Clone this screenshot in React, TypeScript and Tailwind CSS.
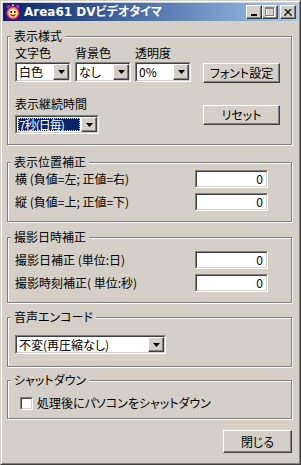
import React from "react";

const raised =
  "border border-t-white border-l-white border-r-[#404040] border-b-[#404040] shadow-[inset_-1px_-1px_0_#808080] bg-[#d4d0c8]";

function Arrow() {
  return (
    <svg width="7" height="4" viewBox="0 0 7 4">
      <polygon points="0,0 7,0 3.5,4" fill="#000" />
    </svg>
  );
}

function Sunken({ className = "", children }: { className?: string; children?: React.ReactNode }) {
  return (
    <div className={`flex border border-t-[#808080] border-l-[#808080] border-r-white border-b-white ${className}`}>
      <div className="flex flex-1 min-w-0 border border-t-[#404040] border-l-[#404040] border-r-[#d4d0c8] border-b-[#d4d0c8] bg-white">
        {children}
      </div>
    </div>
  );
}

function Combo({ value, className = "", selected }: { value: string; className?: string; selected?: boolean }) {
  return (
    <Sunken className={className}>
      {selected ? (
        <div className="flex-1 min-w-0 m-[1px] flex items-center bg-[#0a246a] text-white pl-[1px] outline outline-1 outline-dotted outline-[#d4d0c8] -outline-offset-1 leading-[14px] tracking-[-1px] whitespace-nowrap">
          {value}
        </div>
      ) : (
        <div className="flex-1 min-w-0 flex items-center pl-[2px] leading-[14px] whitespace-nowrap">{value}</div>
      )}
      <div className={`${raised} w-[16px] flex items-center justify-center`}>
        <Arrow />
      </div>
    </Sunken>
  );
}

function Edit({ value }: { value: string }) {
  return (
    <Sunken className="w-[73px] h-[18px]">
      <div className="flex-1 flex items-center justify-end pr-[3px] leading-[14px]">{value}</div>
    </Sunken>
  );
}

function Button({ label, className = "" }: { label: string; className?: string }) {
  return <div className={`${raised} flex items-center justify-center leading-[14px] ${className}`}>{label}</div>;
}

function Group({ label, className = "", children }: { label: string; className?: string; children?: React.ReactNode }) {
  return (
    <div className={`relative border border-[#808080] shadow-[1px_1px_0_#fff,inset_1px_1px_0_#fff] ${className}`}>
      <span className="absolute left-[3px] top-[-8px] bg-[#d4d0c8] px-[3px] leading-[14px] whitespace-nowrap">{label}</span>
      {children}
    </div>
  );
}

function ClockIcon() {
  return (
    <svg width="16" height="16" viewBox="0 0 16 16">
      <circle cx="3.5" cy="3" r="2.5" fill="#8040c0" stroke="#400080" strokeWidth="0.8" />
      <circle cx="12.5" cy="3" r="2.5" fill="#8040c0" stroke="#400080" strokeWidth="0.8" />
      <rect x="7" y="0.5" width="2" height="2" fill="#ffe000" />
      <circle cx="8" cy="9" r="6.5" fill="#ff40c0" stroke="#800060" strokeWidth="0.8" />
      <circle cx="8" cy="9" r="4.6" fill="#ffff40" />
      <rect x="5.5" y="7" width="1.5" height="2" fill="#000" />
      <rect x="9" y="7" width="1.5" height="2" fill="#000" />
      <path d="M5.5 10.5 Q8 13 10.5 10.5" stroke="#c00000" strokeWidth="1.2" fill="none" />
      <rect x="2" y="14" width="2" height="2" fill="#800060" />
      <rect x="12" y="14" width="2" height="2" fill="#800060" />
    </svg>
  );
}

function CaptionButton({ kind }: { kind: "min" | "max" | "close" }) {
  return (
    <div className={`${raised} w-[16px] h-[14px] flex items-center justify-center`}>
      {kind === "min" && (
        <svg width="8" height="7" viewBox="0 0 8 7">
          <rect x="1" y="5" width="6" height="2" fill="#000" />
        </svg>
      )}
      {kind === "max" && (
        <svg width="10" height="10" viewBox="0 0 10 10">
          <rect x="1.5" y="1.5" width="8" height="8" fill="none" stroke="#fff" />
          <rect x="0.5" y="0.5" width="8" height="8" fill="none" stroke="#808080" />
          <rect x="0" y="1" width="9" height="1" fill="#808080" />
        </svg>
      )}
      {kind === "close" && (
        <svg width="8" height="7" viewBox="0 0 8 7">
          <path d="M0.5 0 L7.5 7 M1.5 0 L8 6.5 M7.5 0 L0.5 7 M6.5 0 L0 6.5" stroke="#000" strokeWidth="1" />
        </svg>
      )}
    </div>
  );
}

export default function App() {
  return (
    <div className="w-[301px] h-[465px] bg-[#d4d0c8] border border-t-[#d4d0c8] border-l-[#d4d0c8] border-r-[#404040] border-b-[#404040] font-['Noto_Sans_CJK_JP',sans-serif] text-[12px] text-black [font-feature-settings:'palt']">
      <div className="h-full flex flex-col border border-t-white border-l-white border-r-[#808080] border-b-[#808080] p-[1px]">
        {/* title bar */}
        <div className="h-[18px] flex items-center bg-gradient-to-r from-[#0a246a] to-[#a6caf0] pl-[2px] pr-[2px]">
          <ClockIcon />
          <span className="ml-[3px] text-white font-bold leading-[14px] whitespace-nowrap font-['DejaVu_Sans','Noto_Sans_CJK_JP',sans-serif]">
            Area61 DVビデオタイマ
          </span>
          <div className="ml-auto flex items-center">
            <CaptionButton kind="min" />
            <CaptionButton kind="max" />
            <div className="w-[2px]" />
            <CaptionButton kind="close" />
          </div>
        </div>

        {/* client */}
        <div className="flex flex-col pl-[4px] pr-[6px]">
          <Group label="表示様式" className="mt-[15px] h-[109px] pl-[7px] pt-[9px]">
            <div className="flex items-start">
              <div className="flex flex-col w-[56px]">
                <span className="leading-[14px]">文字色</span>
                <Combo value="白色" className="mt-[2px] h-[20px]" />
              </div>
              <div className="flex flex-col w-[56px] ml-[4px]">
                <span className="leading-[14px]">背景色</span>
                <Combo value="なし" className="mt-[2px] h-[20px]" />
              </div>
              <div className="flex flex-col w-[56px] ml-[4px]">
                <span className="leading-[14px]">透明度</span>
                <Combo value="0%" className="mt-[2px] h-[20px]" />
              </div>
              <Button label="フォント設定" className="ml-[12px] mt-[17px] w-[77px] h-[20px]" />
            </div>
            <div className="flex items-start mt-[14px]">
              <div className="flex flex-col w-[84px]">
                <span className="leading-[14px]">表示継続時間</span>
                <Combo value="7秒(日毎)" selected className="mt-[4px] h-[19px]" />
              </div>
              <Button label="リセット" className="ml-[104px] mt-[8px] w-[77px] h-[20px]" />
            </div>
          </Group>

          <Group label="表示位置補正" className="mt-[17px] h-[60px] pl-[7px] pr-[23px] pt-[7px]">
            <div className="flex items-center justify-between">
              <span className="leading-[14px]">横 (負値=左; 正値=右)</span>
              <Edit value="0" />
            </div>
            <div className="flex items-center justify-between mt-[5px]">
              <span className="leading-[14px]">縦 (負値=上; 正値=下)</span>
              <Edit value="0" />
            </div>
          </Group>

          <Group label="撮影日時補正" className="mt-[15px] h-[66px] pl-[7px] pr-[23px] pt-[13px]">
            <div className="flex items-center justify-between">
              <span className="leading-[14px]">撮影日補正 (単位:日)</span>
              <Edit value="0" />
            </div>
            <div className="flex items-center justify-between mt-[5px]">
              <span className="leading-[14px]">撮影時刻補正( 単位:秒)</span>
              <Edit value="0" />
            </div>
          </Group>

          <Group label="音声エンコード" className="mt-[14px] h-[50px] pl-[7px] pt-[17px]">
            <Combo value="不変(再圧縮なし)" className="w-[151px] h-[19px]" />
          </Group>

          <Group label="シャットダウン" className="mt-[13px] h-[39px] pl-[12px] pt-[15px]">
            <div className="flex items-center">
              <Sunken className="w-[13px] h-[13px]" />
              <span className="ml-[4px] leading-[14px]">処理後にパソコンをシャットダウン</span>
            </div>
          </Group>

          <div className="flex justify-end mt-[11px]">
            <Button label="閉じる" className="w-[69px] h-[23px]" />
          </div>
        </div>
      </div>
    </div>
  );
}
